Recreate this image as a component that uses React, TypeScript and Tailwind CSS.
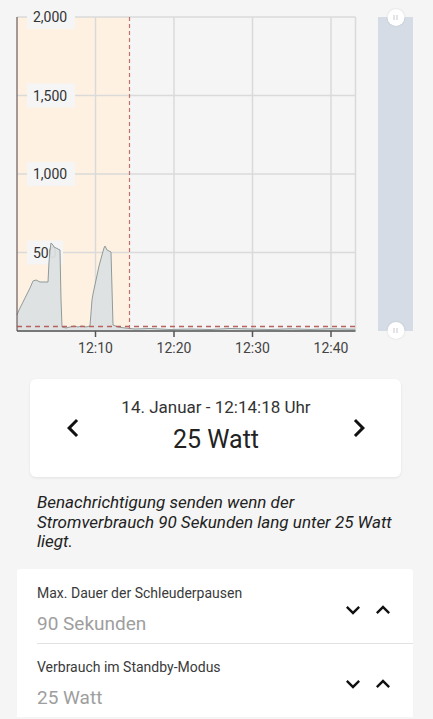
import React from "react";

const X0 = 17;
const X1 = 355.5;
const Y0 = 17;
const YB = 331;
const STEP_X = 78.5;
const STEP_Y = 78.5;

const Y_LABELS = ["2,000", "1,500", "1,000", "500"];
const X_LABELS = ["12:10", "12:20", "12:30", "12:40"];

const SERIES: [number, number][] = [
  [17, 315], [19, 310], [22, 304], [26, 296], [30, 288], [33, 281], [36, 280],
  [40, 282], [44, 282], [48, 282], [49, 262], [50, 250], [51, 243], [53, 245],
  [54, 247], [56, 248], [58, 249], [60, 250], [61, 300], [62, 327], [66, 328],
  [70, 327], [74, 326], [78, 327], [82, 326], [86, 327], [90, 326], [92, 300],
  [93, 294], [96, 280], [99, 266], [102, 255], [104, 248], [105, 246], [107, 250],
  [109, 251], [111, 252], [113, 325], [118, 327], [125, 328], [135, 329],
  [150, 328.5], [170, 329.5], [190, 329], [210, 329.5], [230, 328.5], [250, 329],
  [270, 329.5], [290, 328.8], [310, 329.4], [330, 328.8], [355, 329.2],
];

function Chart() {
  const line = SERIES.map(([x, y], i) => `${i === 0 ? "M" : "L"}${x} ${y}`).join(" ");
  const area = `M${X0} ${YB} ${line.replace("M", "L")} L355 ${YB} Z`;
  return (
    <svg width={365} height={362} className="shrink-0" style={{ fontFamily: "Roboto, sans-serif" }}>
      <rect x={X0} y={Y0} width={129.5 - X0} height={YB - Y0} fill="#fef1e1" />
      {[0, 1, 2, 3, 4].map((i) => (
        <line key={"h" + i} x1={X0} x2={X1} y1={Y0 + i * STEP_Y} y2={Y0 + i * STEP_Y} stroke="#dadada" strokeWidth={1.5} />
      ))}
      {[1, 2, 3, 4].map((i) => (
        <line key={"v" + i} x1={X0 + i * STEP_X} x2={X0 + i * STEP_X} y1={Y0} y2={YB} stroke="#dadada" strokeWidth={1.5} />
      ))}
      <line x1={X1} x2={X1} y1={Y0} y2={YB} stroke="#dadada" strokeWidth={1.5} />
      {Y_LABELS.map((t, i) => {
        const y = Y0 + i * STEP_Y;
        const w = t.length === 3 ? 36 : 48;
        return (
          <g key={t}>
            <rect x={27} y={y - 12} width={w} height={24} fill="#f5f5f5" />
            <text x={33} y={y + 5} fontSize={14} fill="#333">
              {t}
            </text>
          </g>
        );
      })}
      <path d={area} fill="#dde0e1" fillOpacity={0.95} />
      <path d={line} fill="none" stroke="#8e9b9b" strokeWidth={1} />
      <line x1={X0} x2={X1} y1={326.5} y2={326.5} stroke="#b8625f" strokeWidth={1.5} strokeDasharray="5 4" />
      <line x1={129.5} x2={129.5} y1={Y0} y2={YB} stroke="#c0706d" strokeWidth={1.2} strokeDasharray="4 3" />
      <line x1={X0} x2={X0} y1={Y0} y2={YB} stroke="#6e5a5a" strokeWidth={1.2} />
      <line x1={X0} x2={X1} y1={YB} y2={YB} stroke="#555" strokeWidth={1.5} />
      {X_LABELS.map((t, i) => {
        const x = X0 + (i + 1) * STEP_X;
        return (
          <g key={t}>
            <line x1={x} x2={x} y1={YB} y2={YB + 6} stroke="#555" strokeWidth={1.5} />
            <text x={x} y={353} fontSize={14} fill="#444" textAnchor="middle">
              {t}
            </text>
          </g>
        );
      })}
    </svg>
  );
}

function Handle({ className }: { className: string }) {
  return (
    <div className={`absolute left-1/2 -translate-x-1/2 w-[17px] h-[17px] rounded-full bg-white shadow-[0_0_2px_rgba(0,0,0,0.15)] flex items-center justify-center gap-[2px] ${className}`}>
      <span className="w-px h-[5px] bg-[#c5c9cf]" />
      <span className="w-px h-[5px] bg-[#c5c9cf]" />
    </div>
  );
}

const Icon = ({ d, size, className }: { d: string; size: number; className?: string }) => (
  <svg width={size} height={size} viewBox="0 0 24 24" className={className}>
    <path d={d} fill="currentColor" />
  </svg>
);

const CHEVRON_LEFT = "M15.41 7.41L14 6l-6 6 6 6 1.41-1.41L10.83 12z";
const CHEVRON_RIGHT = "M10 6L8.59 7.41 13.17 12l-4.58 4.59L10 18l6-6z";
const EXPAND_MORE = "M16.59 8.59L12 13.17 7.41 8.59 6 10l6 6 6-6z";
const EXPAND_LESS = "M12 8l-6 6 1.41 1.41L12 10.83l4.59 4.58L18 14z";

function Setting({ label, value, first }: { label: string; value: string; first?: boolean }) {
  return (
    <div className={`flex items-center pr-[16px] ${first ? "pt-[16px] pb-[8px]" : "pt-[15px] pb-[8px]"}`}>
      <div className="flex-1 pl-[20px]">
        <p className="text-[14px] leading-[17px] text-[#3a3a3a]">{label}</p>
        <p className="mt-[10px] text-[19px] leading-[23px] text-[#9e9e9e]">{value}</p>
      </div>
      <div className="flex items-center gap-[2px] text-[#111]">
        <Icon d={EXPAND_MORE} size={28} />
        <Icon d={EXPAND_LESS} size={28} />
      </div>
    </div>
  );
}

export default function App() {
  return (
    <div className="min-h-[719px] bg-[#f5f5f5] overflow-hidden" style={{ fontFamily: "Roboto, 'Noto Sans', sans-serif" }}>
      <div className="flex">
        <Chart />
        <div className="relative ml-[13px] mt-[17px] w-[35px] h-[314px] bg-[#d6dce5]">
          <Handle className="-top-[8px]" />
          <Handle className="-bottom-[8px]" />
        </div>
      </div>

      <div className="ml-[30px] mt-[17px] w-[371px] h-[98px] rounded-md bg-white shadow-[0_1px_3px_rgba(0,0,0,0.08)] flex items-center pl-[25px] pr-[24px]">
        <Icon d={CHEVRON_LEFT} size={36} className="text-[#111] shrink-0" />
        <div className="flex-1 self-stretch flex flex-col items-center pt-[18px]">
          <p className="text-[17px] leading-[20px] text-[#333]">14. Januar - 12:14:18 Uhr</p>
          <p className="mt-[8px] text-[25px] leading-[30px] text-[#222]">25 Watt</p>
        </div>
        <Icon d={CHEVRON_RIGHT} size={36} className="text-[#111] shrink-0" />
      </div>

      <p className="mt-[16px] pl-[37px] pr-[20px] italic text-[17px] leading-[19.5px] text-[#222]">
        Benachrichtigung senden wenn der Stromverbrauch 90 Sekunden lang unter 25 Watt liegt.
      </p>

      <div className="ml-[17px] mt-[17px] w-[396px] bg-white rounded-t-[3px]">
        <Setting label="Max. Dauer der Schleuderpausen" value="90 Sekunden" first />
        <div className="ml-[20px] h-px bg-[#e2e2e2]" />
        <Setting label="Verbrauch im Standby-Modus" value="25 Watt" />
      </div>
    </div>
  );
}
